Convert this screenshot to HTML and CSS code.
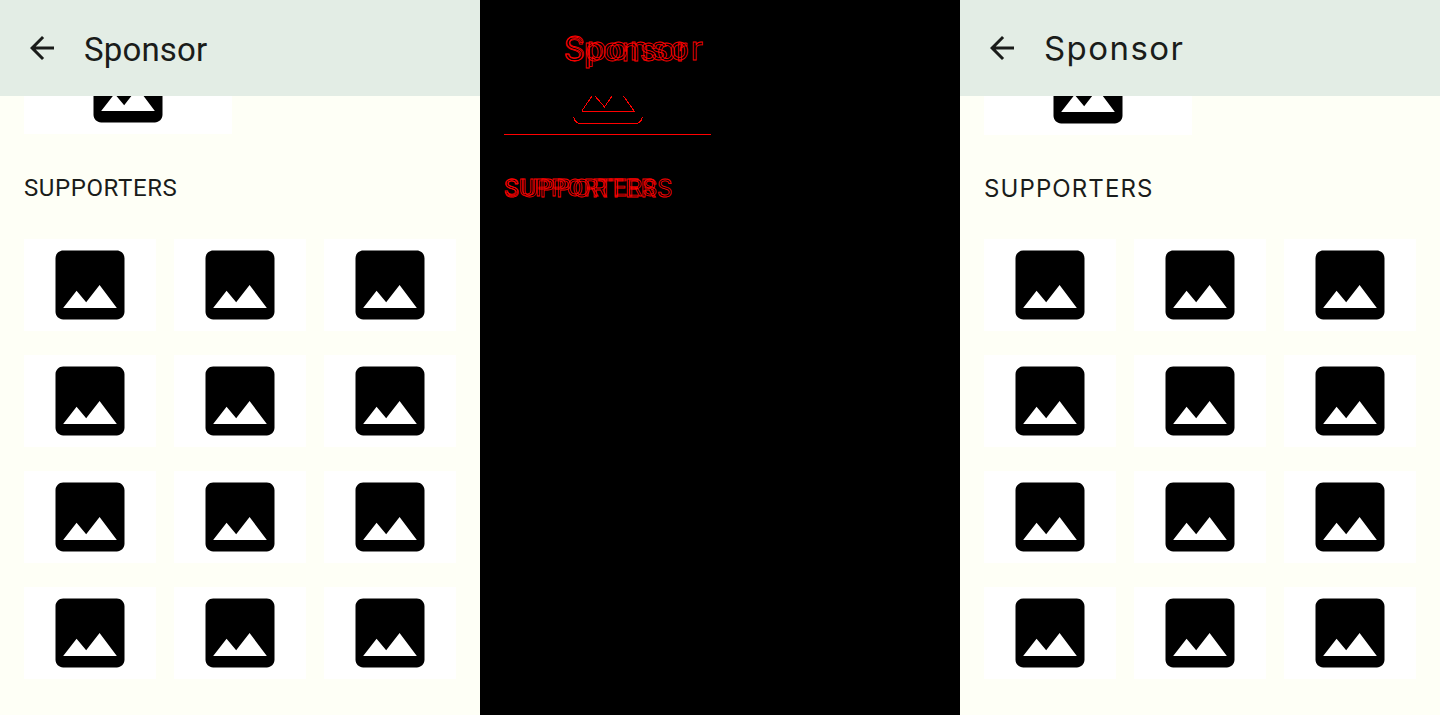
FILE: index.html
```html
<!DOCTYPE html>
<html lang="en">
<head>
<meta charset="utf-8">
<title>Sponsor</title>
<link rel="stylesheet" href="styles.css">
</head>
<body>
<svg class="defs" aria-hidden="true">
  <symbol id="pic" viewBox="0 0 24 24"><path d="M21 19V5c0-1.1-.9-2-2-2H5c-1.1 0-2 .9-2 2v14c0 1.1.9 2 2 2h14c1.100 0 2-.9 2-2zM8.500 13.500l2.500 3.010L14.500 12l4.500 6H5l3.500-4.500z"/></symbol>
  <symbol id="back" viewBox="0 0 24 24"><path d="M20 11H7.830l5.590-5.590L12 4l-8 8 8 8 1.410-1.410L7.830 13H20v-2z"/></symbol>
</svg>
<section class="panel roboto">
  <header class="bar"><svg class="arrow"><use href="#back"/></svg><h1 class="title">Sponsor</h1></header>
  <div class="content">
    <div class="hero"><svg class="pic"><use href="#pic"/></svg></div>
    <h2 class="label">SUPPORTERS</h2>
    <div class="grid">
      <div class="card"><svg class="pic"><use href="#pic"/></svg></div><div class="card"><svg class="pic"><use href="#pic"/></svg></div><div class="card"><svg class="pic"><use href="#pic"/></svg></div>
      <div class="card"><svg class="pic"><use href="#pic"/></svg></div><div class="card"><svg class="pic"><use href="#pic"/></svg></div><div class="card"><svg class="pic"><use href="#pic"/></svg></div>
      <div class="card"><svg class="pic"><use href="#pic"/></svg></div><div class="card"><svg class="pic"><use href="#pic"/></svg></div><div class="card"><svg class="pic"><use href="#pic"/></svg></div>
      <div class="card"><svg class="pic"><use href="#pic"/></svg></div><div class="card"><svg class="pic"><use href="#pic"/></svg></div><div class="card"><svg class="pic"><use href="#pic"/></svg></div>
    </div>
  </div>
</section>
<section class="panel diff">
  <span class="ghost ghost-title roboto-text">Sponsor</span>
  <span class="ghost ghost-title wide-text">Sponsor</span>
  <span class="ghost ghost-label roboto-text">SUPPORTERS</span>
  <span class="ghost ghost-label wide-text">SUPPORTERS</span>
  <svg class="diff-lines" viewBox="0 0 480 715">
    <path d="M101.500 111.500L112 96M115 96L124.500 107L132 96M143.500 96L154.500 111.500H101.500"/>
    <path d="M93.500 117C94.500 121 97 123.500 101 123.500H155C159 123.500 161.500 121 162.500 117"/>
    <path d="M24 134.500H231"/>
  </svg>
</section>
<section class="panel wide">
  <header class="bar"><svg class="arrow"><use href="#back"/></svg><h1 class="title">Sponsor</h1></header>
  <div class="content">
    <div class="hero"><svg class="pic"><use href="#pic"/></svg></div>
    <h2 class="label">SUPPORTERS</h2>
    <div class="grid">
      <div class="card"><svg class="pic"><use href="#pic"/></svg></div><div class="card"><svg class="pic"><use href="#pic"/></svg></div><div class="card"><svg class="pic"><use href="#pic"/></svg></div>
      <div class="card"><svg class="pic"><use href="#pic"/></svg></div><div class="card"><svg class="pic"><use href="#pic"/></svg></div><div class="card"><svg class="pic"><use href="#pic"/></svg></div>
      <div class="card"><svg class="pic"><use href="#pic"/></svg></div><div class="card"><svg class="pic"><use href="#pic"/></svg></div><div class="card"><svg class="pic"><use href="#pic"/></svg></div>
      <div class="card"><svg class="pic"><use href="#pic"/></svg></div><div class="card"><svg class="pic"><use href="#pic"/></svg></div><div class="card"><svg class="pic"><use href="#pic"/></svg></div>
    </div>
  </div>
</section>
</body>
</html>
```
FILE: styles.css
```css
* { box-sizing: border-box; }
html, body { margin: 0; height: 715px; overflow: hidden; }
body { display: flex; background: #000; }
.defs { display: none; }

.panel {
  position: relative;
  width: 480px;
  height: 715px;
  overflow: hidden;
  background: #fefff6;
  color: #1a1c1a;
}

.bar {
  position: relative;
  z-index: 1;
  display: flex;
  align-items: center;
  gap: 24px;
  height: 96px;
  padding-left: 24px;
  background: #e3ede5;
}
.arrow { width: 36px; height: 36px; fill: #1a1c1a; flex: none; }
.title { margin: 0; font-weight: 400; }
.roboto .title { padding-top: 4px; }

.roboto .title, .roboto-text { font: 400 33px/44px Roboto, sans-serif; letter-spacing: 0.15px; }
.roboto .label, .roboto-text.ghost-label { font: 450 24px/32px Roboto, sans-serif; letter-spacing: 0.6px; }
.wide .title, .wide-text { font: 400 33px/44px Inter, sans-serif; letter-spacing: 1.45px; }
.wide .label, .wide-text.ghost-label { font: 400 24px/32px Inter, sans-serif; letter-spacing: 1.1px; }

.content { padding: 0 24px; }
.hero {
  display: flex;
  justify-content: center;
  width: 208px;
  height: 92px;
  margin-top: -54px;
  background: #fff;
}
.wide .hero { margin-top: -53px; }
.label { margin: 38px 0 35px; }
.wide .label { margin: 38px 0 34px; }
.grid {
  display: grid;
  grid-template-columns: repeat(3, 132px);
  grid-auto-rows: 92px;
  column-gap: 18px;
  row-gap: 24px;
}
.card { display: flex; justify-content: center; background: #fff; }
.pic { width: 92px; height: 92px; flex: none; fill: #000; }

.diff { background: #000; }
.ghost {
  position: absolute;
  color: transparent;
  -webkit-text-stroke: 0.8px #f00;
  white-space: nowrap;
}
.ghost-title { left: 84px; top: 26px; }
.ghost-title.roboto-text { top: 28px; }
.ghost-label { left: 24px; top: 172px; }
.ghost-label.wide-text { top: 173px; }
.diff-lines {
  position: absolute;
  left: 0;
  top: 0;
  width: 480px;
  height: 715px;
  fill: none;
  stroke: #f00;
  stroke-width: 1;
  shape-rendering: crispEdges;
}
```
